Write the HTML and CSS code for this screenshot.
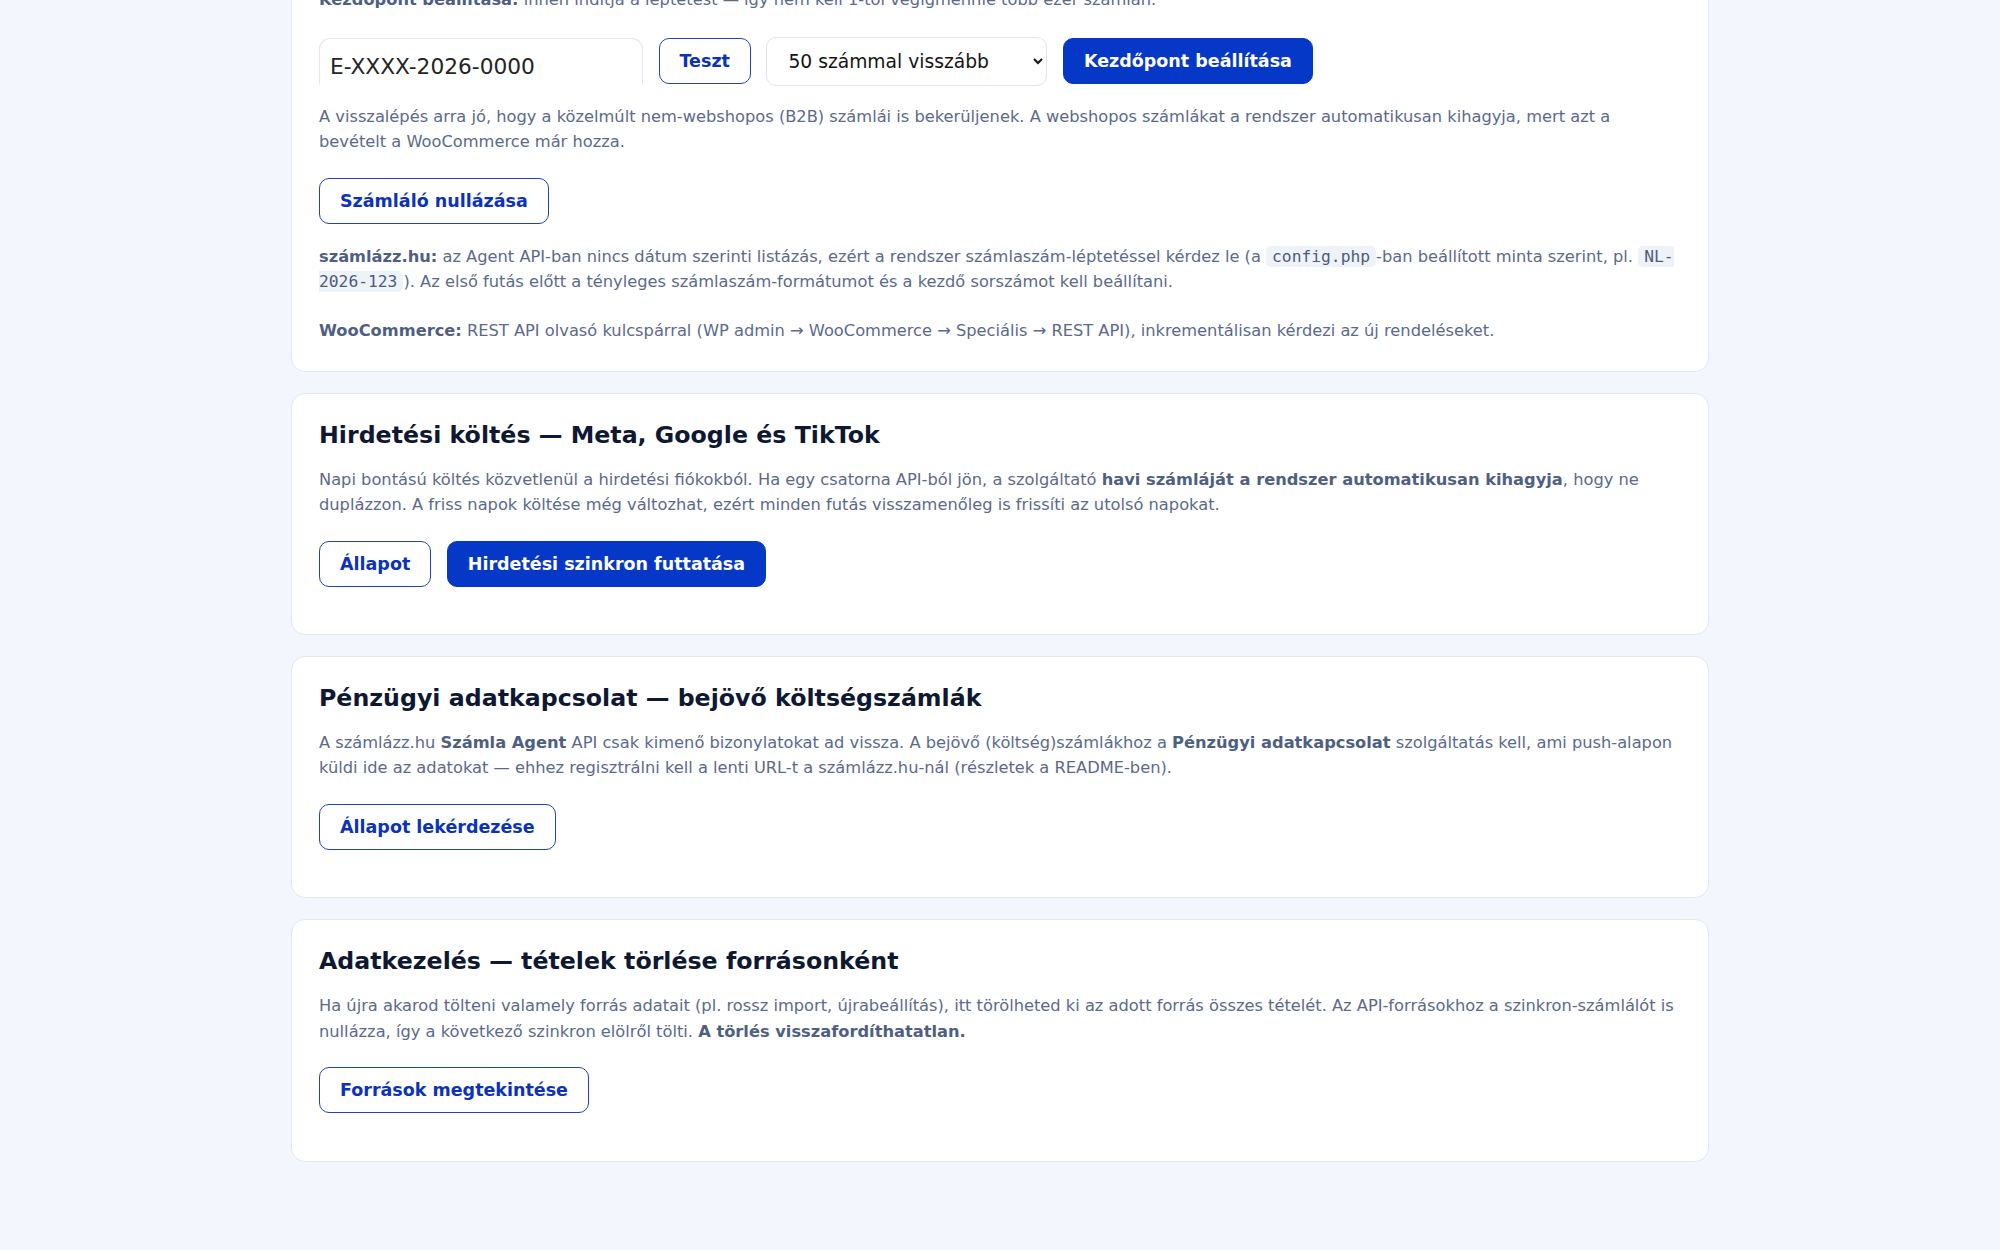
FILE: index.html
```html
<!DOCTYPE html>
<html lang="hu">
  <head>
    <meta charset="UTF-8" />
    <meta name="viewport" content="width=device-width, initial-scale=1.0" />
    <title>Szinkron beállítások</title>
    <link rel="stylesheet" href="styles.css">
  </head>
  <body>
    <main class="page">
      <section class="card">
        <p><strong>Kezdőpont beállítása:</strong> innen indítja a léptetést — így nem kell 1-től végigmennie több ezer számlán.</p>
        <div class="actions form-row">
          <input type="text" class="field" id="start-number" value="E-XXXX-2026-0000" />
          <button class="btn btn-outline" id="test">Teszt</button>
          <select class="select" id="step-back">
            <option value="50">50 számmal visszább</option>
            <option value="0">Pontosan innen</option>
            <option value="100">100 számmal visszább</option>
            <option value="200">200 számmal visszább</option>
          </select>
          <button class="btn btn-primary" id="set-start">Kezdőpont beállítása</button>
        </div>
        <p>A visszalépés arra jó, hogy a közelmúlt nem-webshopos (B2B) számlái is bekerüljenek. A webshopos számlákat a rendszer automatikusan kihagyja, mert azt a bevételt a WooCommerce már hozza.</p>
        <div class="actions">
          <button class="btn btn-outline" id="reset-counter">Számláló nullázása</button>
        </div>
        <p><strong>számlázz.hu:</strong> az Agent API-ban nincs dátum szerinti listázás, ezért a rendszer számlaszám-léptetéssel kérdez le (a <code>config.php</code>-ban beállított minta szerint, pl. <code>NL-<wbr>2026-123</code>). Az első futás előtt a tényleges számlaszám-formátumot és a kezdő sorszámot kell beállítani.</p>
        <p><strong>WooCommerce:</strong> REST API olvasó kulcspárral (WP admin → WooCommerce → Speciális → REST API), inkrementálisan kérdezi az új rendeléseket.</p>
      </section>

      <section class="card">
        <h2>Hirdetési költés — Meta, Google és TikTok</h2>
        <p>Napi bontású költés közvetlenül a hirdetési fiókokból. Ha egy csatorna API-ból jön, a szolgáltató <strong>havi számláját a rendszer automatikusan kihagyja</strong>, hogy ne duplázzon. A friss napok költése még változhat, ezért minden futás visszamenőleg is frissíti az utolsó napokat.</p>
        <div class="actions">
          <button class="btn btn-outline" id="ads-status">Állapot</button>
          <button class="btn btn-primary" id="ads-sync">Hirdetési szinkron futtatása</button>
        </div>
      </section>

      <section class="card">
        <h2>Pénzügyi adatkapcsolat — bejövő költségszámlák</h2>
        <p>A számlázz.hu <strong>Számla Agent</strong> API csak kimenő bizonylatokat ad vissza. A bejövő (költség)számlákhoz a <strong>Pénzügyi adatkapcsolat</strong> szolgáltatás kell, ami push-alapon küldi ide az adatokat — ehhez regisztrálni kell a lenti URL-t a számlázz.hu-nál (részletek a README-ben).</p>
        <div class="actions">
          <button class="btn btn-outline" id="finance-status">Állapot lekérdezése</button>
        </div>
      </section>

      <section class="card">
        <h2>Adatkezelés — tételek törlése forrásonként</h2>
        <p>Ha újra akarod tölteni valamely forrás adatait (pl. rossz import, újrabeállítás), itt törölheted ki az adott forrás összes tételét. Az API-forrásokhoz a szinkron-számlálót is nullázza, így a következő szinkron elölről tölti. <strong>A törlés visszafordíthatatlan.</strong></p>
        <div class="actions">
          <button class="btn btn-outline" id="sources">Források megtekintése</button>
        </div>
      </section>
    </main>
  </body>
</html>
```

FILE: styles.css
```css
body {
  margin: 0;
  background-color: #f3f6fd;
  font-family: "DejaVu Sans", sans-serif;
  font-size: 16.25px;
  color: #5b6a8c;
}
.page {
  max-width: 1418px;
  margin: -40px auto 0;
  padding-bottom: 68px;
}
.card {
  background-color: #fff;
  border: 1px solid #e1e7f2;
  border-radius: 14px;
  padding: 26px 27px 27.5px;
  margin-bottom: 21px;
}
h2 {
  margin: 0 0 16.5px;
  font-size: 23.7px;
  line-height: 30px;
  color: #0e1833;
}
p {
  margin: 0 0 23px;
  line-height: 25.6px;
}
p:last-child {
  margin-bottom: 0;
}
strong {
  color: #4f5f82;
}
code {
  font-family: "DejaVu Sans Mono", monospace;
  font-size: 16.3px;
  background-color: #eef2f9;
  border-radius: 5px;
  padding: 1px 6px;
  color: #4d5c7d;
}
.actions {
  display: flex;
  align-items: center;
  gap: 15.5px;
  margin: 0 0 20px;
}
.form-row {
  margin-top: 24px;
  margin-bottom: 18px;
}
.btn {
  font-family: inherit;
  font-size: 17.5px;
  font-weight: bold;
  padding: 12px 20px;
  border-radius: 10px;
  border: 1.5px solid #2443b6;
  cursor: pointer;
}
.btn-outline {
  background-color: #fff;
  color: #0b33ba;
}
.btn-primary {
  background-color: #0638c8;
  border-color: #0638c8;
  color: #fff;
}
.btn-primary:hover {
  background-color: #0a2fa0;
}
.field {
  box-sizing: border-box;
  width: 324px;
  height: 47px;
  padding: 10px 10px 0;
  font-family: inherit;
  font-size: 21.7px;
  color: #242424;
  border: 1px solid #e2e7f3;
  border-bottom-color: transparent;
  border-radius: 11px 11px 0 0;
  outline: none;
}
.select {
  box-sizing: border-box;
  width: 281px;
  height: 49px;
  padding: 0 6px 0 17px;
  font-family: inherit;
  font-size: 18.7px;
  color: #141414;
  background-color: #fff;
  border: 1px solid #dfe4f1;
  border-radius: 10px;
}
```
